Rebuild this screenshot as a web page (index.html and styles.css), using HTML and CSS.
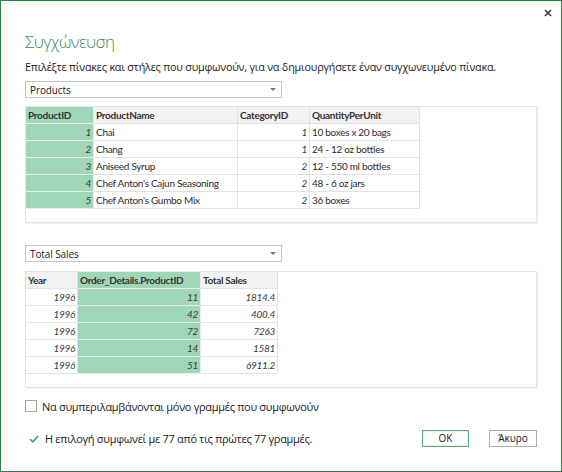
FILE: index.html
```html
<!DOCTYPE html>
<html lang="el">
<head>
<meta charset="utf-8">
<title>Συγχώνευση</title>
<link rel="stylesheet" href="styles.css">
</head>
<body>
<div class="dialog">
  <div class="titlebar">
    <button class="close" aria-label="Κλείσιμο">
      <svg width="8" height="8" viewBox="0 0 8 8"><path d="M1 1L7 7M7 1L1 7" stroke="#3a3a3a" stroke-width="1.6" fill="none"/></svg>
    </button>
  </div>
  <h1 class="title">Συγχώνευση</h1>
  <p class="desc">Επιλέξτε πίνακες και στήλες που συμφωνούν, για να δημιουργήσετε έναν συγχωνευμένο πίνακα.</p>

  <div class="select select-first"><span>Products</span><span class="arrow"></span></div>
  <div class="grid-box">
    <table class="grid t1">
      <colgroup><col class="c-pid"><col class="c-pname"><col class="c-cat"><col class="c-qty"></colgroup>
      <thead>
        <tr><th class="sel">ProductID</th><th>ProductName</th><th>CategoryID</th><th>QuantityPerUnit</th></tr>
      </thead>
      <tbody>
        <tr><td class="sel num">1</td><td>Chai</td><td class="num">1</td><td>10 boxes x 20 bags</td></tr>
        <tr><td class="sel num">2</td><td>Chang</td><td class="num">1</td><td>24 - 12 oz bottles</td></tr>
        <tr><td class="sel num">3</td><td>Aniseed Syrup</td><td class="num">2</td><td>12 - 550 ml bottles</td></tr>
        <tr><td class="sel num">4</td><td>Chef Anton's Cajun Seasoning</td><td class="num">2</td><td>48 - 6 oz jars</td></tr>
        <tr><td class="sel num">5</td><td>Chef Anton's Gumbo Mix</td><td class="num">2</td><td>36 boxes</td></tr>
      </tbody>
    </table>
  </div>

  <div class="select select-second"><span>Total Sales</span><span class="arrow"></span></div>
  <div class="grid-box box-second">
    <table class="grid t2">
      <colgroup><col class="c-year"><col class="c-odp"><col class="c-ts"></colgroup>
      <thead>
        <tr><th>Year</th><th class="sel">Order_Details.ProductID</th><th>Total Sales</th></tr>
      </thead>
      <tbody>
        <tr><td class="num">1996</td><td class="sel num">11</td><td class="num">1814.4</td></tr>
        <tr><td class="num">1996</td><td class="sel num">42</td><td class="num">400.4</td></tr>
        <tr><td class="num">1996</td><td class="sel num">72</td><td class="num">7263</td></tr>
        <tr><td class="num">1996</td><td class="sel num">14</td><td class="num">1581</td></tr>
        <tr><td class="num">1996</td><td class="sel num">51</td><td class="num">6911.2</td></tr>
      </tbody>
    </table>
  </div>

  <label class="check-row"><span class="checkbox"></span><span>Να συμπεριλαμβάνονται μόνο γραμμές που συμφωνούν</span></label>

  <div class="footer">
    <div class="status">
      <svg class="tick" width="10" height="8" viewBox="0 0 10 8"><path d="M1 4L3.8 6.8L9 1" stroke="#3d9b63" stroke-width="1.5" fill="none"/></svg>
      <span>Η επιλογή συμφωνεί με 77 από τις πρώτες 77 γραμμές.</span>
    </div>
    <div class="buttons">
      <button class="btn btn-ok">OK</button>
      <button class="btn btn-cancel">Άκυρο</button>
    </div>
  </div>
</div>
</body>
</html>
```

FILE: styles.css
```css
* { box-sizing: border-box; }

html, body {
  margin: 0;
  padding: 0;
  background: #ffffff;
}

.dialog {
  width: 562px;
  height: 472px;
  border: 1px solid #2f7d4e;
  background: #ffffff;
  padding: 0 24px 0 24px;
  font-family: "Open Sans", "Noto Sans", "DejaVu Sans", sans-serif;
  color: #262626;
}

.titlebar {
  height: 29px;
  display: flex;
  justify-content: flex-end;
  align-items: flex-start;
  margin-right: -15px;
  padding-top: 8px;
}

.close {
  border: 0;
  background: transparent;
  padding: 0;
  width: 8px;
  height: 8px;
  display: flex;
}

.title {
  margin: 0;
  font-size: 17px;
  line-height: 24px;
  font-weight: 300;
  color: #3c8b5c;
  letter-spacing: -0.6px;
}

.desc {
  margin: 5px 0 0 0;
  font-size: 10.8px;
  line-height: 16px;
  letter-spacing: -0.2px;
  color: #222;
  white-space: nowrap;
}

.select {
  width: 257px;
  height: 17px;
  border: 1px solid #c6c6c6;
  display: flex;
  align-items: center;
  justify-content: space-between;
  padding: 0 5px 0 4px;
  font-size: 10px;
  letter-spacing: -0.1px;
  color: #222;
}

.select-first { margin-top: 6px; }
.select-second { margin-top: 22px; }

.arrow {
  width: 0;
  height: 0;
  border-left: 3px solid transparent;
  border-right: 3px solid transparent;
  border-top: 3px solid #7a7a7a;
}

.grid-box {
  margin-top: 8px;
  width: 512px;
  height: 117px;
  border: 1px solid #e4e4e4;
  box-shadow: 1px 1px 0 #f1f1f1;
  background: #fff;
}

.box-second { margin-top: 9px; }

.grid {
  border-collapse: collapse;
  table-layout: fixed;
  font-family: "Lato", "Liberation Sans", sans-serif;
  font-size: 10px;
  letter-spacing: -0.3px;
  color: #2b2b2b;
  margin: -1px 0 0 -1px;
}

.grid th,
.grid td {
  height: 17px;
  padding: 0 2px;
  border: 1px solid #e2e2e2;
  white-space: nowrap;
  overflow: hidden;
  text-align: left;
  line-height: 15px;
}

.grid th {
  background: #f2f2f2;
  font-weight: 700;
  color: #333;
}

.grid th.sel,
.grid td.sel {
  background: #a0d6b8;
  border-color: #e6eee9;
}

.grid td.num {
  text-align: right;
  font-style: italic;
  color: #3a3a3a;
  padding-right: 2px;
}

.c-pid { width: 68px; }
.c-pname { width: 144px; }
.c-cat { width: 72px; }
.c-qty { width: 110px; }

.c-year { width: 52px; }
.c-odp { width: 123px; }
.c-ts { width: 77px; }

.check-row {
  margin-top: 11px;
  height: 14px;
  display: flex;
  align-items: center;
  gap: 5px;
  font-size: 11px;
  letter-spacing: -0.3px;
  color: #222;
}

.checkbox {
  width: 12px;
  height: 12px;
  border: 1px solid #a6a6a6;
  background: #fff;
  flex: none;
}

.footer {
  margin-top: 17px;
  height: 17px;
  display: flex;
  align-items: center;
}

.status {
  display: flex;
  align-items: center;
  gap: 6px;
  font-size: 11px;
  letter-spacing: -0.3px;
  color: #222;
  padding-left: 4px;
}

.tick { flex: none; }

.buttons {
  margin-left: auto;
  display: flex;
  gap: 20px;
}

.btn {
  height: 17px;
  padding: 0;
  border: 1px solid #adadad;
  background: #fdfdfd;
  font-family: "Open Sans", "Noto Sans", sans-serif;
  font-size: 10px;
  color: #222;
  line-height: 15px;
}

.btn-ok {
  width: 47px;
  border: 1px solid #5aa87b;
  box-shadow: inset 0 0 0 1px #e3f1e8;
}

.btn-cancel { width: 48px; }
```
